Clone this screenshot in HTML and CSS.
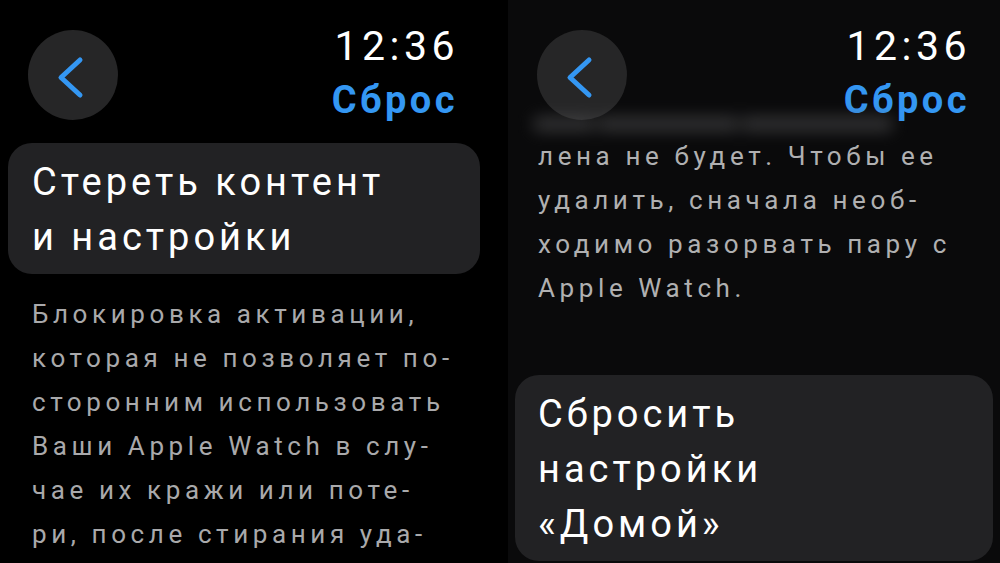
FILE: index.html
```html
<!DOCTYPE html>
<html lang="ru">
  <head>
    <meta charset="UTF-8" />
    <meta name="viewport" content="width=device-width, initial-scale=1.0" />
    <title>Сброс</title>
    <link rel="stylesheet" href="styles.css">
  </head>
  <body>
    <div class="screens">
      <section class="watch watch-left">
        <div class="header">
          <button class="back" aria-label="Назад">
            <svg width="90" height="90" viewBox="0 0 90 90">
              <path d="M52 30 L33 47.5 L52 65" />
            </svg>
          </button>
          <div class="status">
            <div class="time">12:36</div>
            <div class="title">Сброс</div>
          </div>
        </div>
        <div class="card">Стереть контент<br />и настройки</div>
        <p class="note">
          Блокировка активации,<br />
          которая не позволяет по-<br />
          сторонним использовать<br />
          Ваши Apple Watch в слу-<br />
          чае их кражи или поте-<br />
          ри, после стирания уда-
        </p>
      </section>

      <section class="watch watch-right">
        <div class="header">
          <button class="back" aria-label="Назад">
            <svg width="90" height="90" viewBox="0 0 90 90">
              <path d="M52 30 L33 47.5 L52 65" />
            </svg>
          </button>
          <div class="status">
            <div class="time">12:36</div>
            <div class="title">Сброс</div>
          </div>
        </div>
        <!-- previous line scrolled under the header, smeared out -->
        <div class="ghost">
          <span style="width: 60px"></span>
          <span style="width: 140px"></span>
          <span style="width: 150px"></span>
        </div>
        <p class="note">
          лена не будет. Чтобы ее<br />
          удалить, сначала необ-<br />
          ходимо разорвать пару с<br />
          Apple Watch.
        </p>
        <div class="card card-low">Сбросить<br />настройки<br />«Домой»</div>
      </section>
    </div>
  </body>
</html>
```

FILE: styles.css
```css
body {
  margin: 0;
  background: #000;
  font-family: Roboto, "Noto Sans", sans-serif;
  color: #fff;
}
.screens {
  display: flex;
  width: 1000px;
  height: 563px;
  overflow: hidden;
}
.watch {
  flex: none;
  overflow: hidden;
}
.watch-left {
  width: 508px;
  background: #000;
}
.watch-right {
  width: 492px;
  background: #0a0a0b;
}

/* top bar: back button + clock and screen title */
.header {
  display: flex;
  justify-content: space-between;
  align-items: flex-start;
  padding: 30px 53px 0 28px;
}
.watch-right .header {
  padding: 30px 33px 0 29px;
}
.back {
  width: 90px;
  height: 90px;
  padding: 0;
  border: none;
  border-radius: 50%;
  background: #262627;
}
.back svg {
  display: block;
}
.back path {
  fill: none;
  stroke: #3497f3;
  stroke-width: 5;
  stroke-linecap: round;
  stroke-linejoin: round;
}
.status {
  text-align: right;
}
.time {
  margin-top: -6px;
  margin-right: -4px;
  font-size: 41px;
  line-height: 44px;
  letter-spacing: 4.5px;
}
.title {
  margin-top: 12px;
  margin-right: -3px;
  font-size: 38px;
  line-height: 40px;
  font-weight: 700;
  letter-spacing: 3.5px;
  color: #3497f3;
}

/* list button */
.card {
  margin: 23px 28px 0 8px;
  padding: 12px 24px 9px;
  border-radius: 24px;
  background: #222224;
  font-size: 38px;
  line-height: 55px;
  letter-spacing: 4px;
  white-space: nowrap;
}
.card-low {
  margin: 65px 7px 0 7px;
  padding-left: 23px;
}

/* explanatory text */
.note {
  margin: 18px 0 0 32px;
  font-size: 26px;
  line-height: 44px;
  letter-spacing: 4.6px;
  color: #a9a9ab;
  white-space: nowrap;
}
.watch-right .note {
  margin: 0 0 0 30px;
  color: #b0b0b1;
}
.ghost {
  display: flex;
  gap: 4px;
  margin-top: -6px;
  height: 20px;
  padding: 0 0 0 26px;
  align-items: center;
  filter: blur(8px);
  opacity: 0.55;
}
.ghost span {
  height: 14px;
  background: #5a5a5c;
}
```
